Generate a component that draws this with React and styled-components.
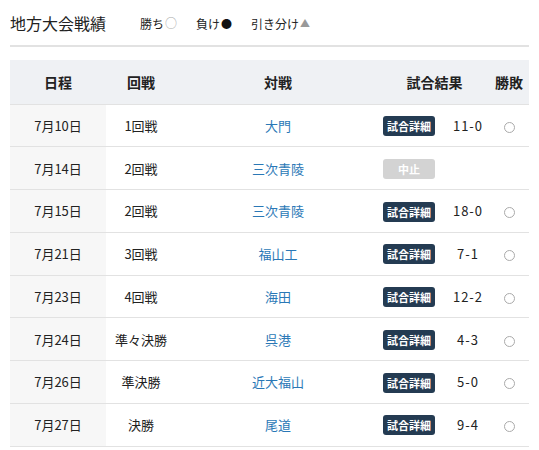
import React from "react";
import styled, { createGlobalStyle } from "styled-components";

const Global = createGlobalStyle`
  html, body { margin: 0; padding: 0; background: #fff; }
  body { font-family: "Noto Sans CJK JP", "Noto Sans", sans-serif; color: #222; }
`;

const Page = styled.div`
  width: 519px;
  margin: 0 10px;
`;

const TopBar = styled.div`
  height: 45px;
  display: flex;
  align-items: center;
  border-bottom: 2px solid #e2e2e2;
`;

const Title = styled.h2`
  margin: 0 34px 0 0;
  font-size: 16px;
  font-weight: 400;
  line-height: 1;
`;

const Legend = styled.div`
  display: flex;
  align-items: center;
  gap: 19px;
  font-size: 12px;
  margin-top: 1px;
`;

const LegendItem = styled.span`
  display: inline-flex;
  align-items: center;
`;

const Mark = styled.span`
  font-size: ${(p) => p.$size || 11}px;
  color: ${(p) => p.$color};
  margin-left: 1px;
  line-height: 1;
`;

const Table = styled.table`
  width: 519px;
  margin-top: 13px;
  border-collapse: collapse;
  table-layout: fixed;
  font-size: 13px;
`;

const HeadRow = styled.tr`
  background: #eff1f4;
  height: 44px;
`;

const Th = styled.th`
  font-size: 14px;
  font-weight: 700;
  text-align: center;
  padding: 0;
  white-space: nowrap;
  border-bottom: 1px solid #e2e2e2;
`;

const Tr = styled.tr`
  height: 42.75px;
`;

const Td = styled.td`
  text-align: center;
  padding: 0;
  padding-left: ${(p) => p.$pl || 0}px;
  border-bottom: 1px solid #e2e2e2;
  background: ${(p) => (p.$shade ? "#f7f7f7" : "transparent")};
  letter-spacing: ${(p) => p.$ls || 0}px;
  white-space: nowrap;
`;

const TeamLink = styled.a`
  color: #2a78b6;
  text-decoration: none;
`;

const DetailButton = styled.span`
  display: inline-flex;
  align-items: center;
  justify-content: center;
  width: 52px;
  height: 20px;
  border-radius: 3px;
  background: ${(p) => (p.$disabled ? "#d3d3d3" : "#243b52")};
  color: #fff;
  font-size: 11px;
  font-weight: 700;
  margin-right: 6px;
  vertical-align: middle;
`;

const Result = styled.span`
  display: inline-block;
  width: 9px;
  height: 9px;
  border: 1px solid #aaa;
  border-radius: 50%;
  vertical-align: middle;
`;

const games = [
  { date: "7月10日", round: "1回戦", team: "大門", score: "11-0" },
  { date: "7月14日", round: "2回戦", team: "三次青陵", cancel: true },
  { date: "7月15日", round: "2回戦", team: "三次青陵", score: "18-0" },
  { date: "7月21日", round: "3回戦", team: "福山工", score: "7-1" },
  { date: "7月23日", round: "4回戦", team: "海田", score: "12-2" },
  { date: "7月24日", round: "準々決勝", team: "呉港", score: "4-3" },
  { date: "7月26日", round: "準決勝", team: "近大福山", score: "5-0" },
  { date: "7月27日", round: "決勝\u3000", team: "尾道", score: "9-4" },
];

export default function App() {
  return (
    <Page>
      <Global />
      <TopBar>
        <Title>地方大会戦績</Title>
        <Legend>
          <LegendItem>
            勝ち<Mark $color="#aaa" $size={12}>○</Mark>
          </LegendItem>
          <LegendItem>
            負け<Mark $color="#111" $size={11}>●</Mark>
          </LegendItem>
          <LegendItem>
            引き分け<Mark $color="#999" $size={10}>▲</Mark>
          </LegendItem>
        </Legend>
      </TopBar>
      <Table>
        <colgroup>
          <col style={{ width: 96 }} />
          <col style={{ width: 70 }} />
          <col style={{ width: 204 }} />
          <col style={{ width: 64 }} />
          <col style={{ width: 45 }} />
          <col style={{ width: 40 }} />
        </colgroup>
        <thead>
          <HeadRow>
            <Th>日程</Th>
            <Th>回戦</Th>
            <Th>対戦</Th>
            <Th colSpan={2}>試合結果</Th>
            <Th>勝敗</Th>
          </HeadRow>
        </thead>
        <tbody>
          {games.map((g, i) => (
            <Tr key={i}>
              <Td $shade>{g.date}</Td>
              <Td>{g.round}</Td>
              <Td>
                <TeamLink href="#">{g.team}</TeamLink>
              </Td>
              <Td>
                <DetailButton $disabled={g.cancel}>
                  {g.cancel ? "中止" : "試合詳細"}
                </DetailButton>
              </Td>
              <Td $ls={1} $pl={3}>{g.score || ""}</Td>
              <Td>{g.cancel ? null : <Result />}</Td>
            </Tr>
          ))}
        </tbody>
      </Table>
    </Page>
  );
}
